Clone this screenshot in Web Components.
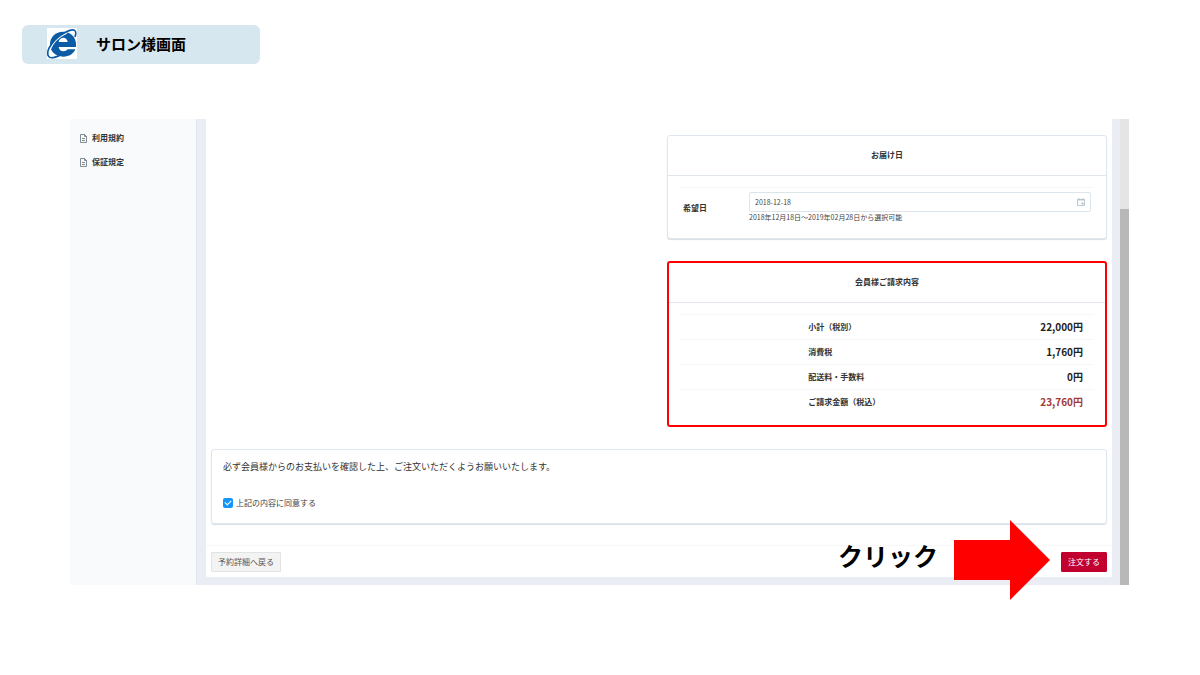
<!DOCTYPE html>
<html lang="ja">
<head>
<meta charset="utf-8">
<title>サロン様画面</title>
<style>
body { margin: 0; background: #fff; color: #333; font: 8px/12px "Noto Sans CJK JP", sans-serif; }
</style>
</head>
<body>
<order-page></order-page>
<script>
const define = (name, html) => {
  const template = document.createElement("template");
  template.innerHTML = html;
  customElements.define(name, class extends HTMLElement {
    constructor() {
      super();
      this.attachShadow({ mode: "open" }).append(template.content.cloneNode(true));
    }
  });
};

define("screen-badge", `
<style>
:host { display: flex; align-items: center; gap: 19px; box-sizing: border-box; width: 238px; max-width: 100%; height: 39px; padding: 0 0 2px 25px; border-radius: 6px; background: #d7e7ef; color: #000; font-size: 15px; font-weight: 700; line-height: 22px; }
svg { width: 30px; height: 31px; background: #fff; }
</style>
<svg viewBox="0 0 90 93" aria-hidden="true">
  <path fill="#0c5ba5" fill-rule="evenodd" d="M48 11C70 11 87 27 87 48V57H35C36 65 42 70 49 70C55 70 59 68 62 64H85C80 78 66 86 49 86C25 86 9 70 9 49C9 27 26 11 48 11ZM35 42H62C61 34 56 29 49 29C42 29 36 34 35 42Z"/>
  <path fill="none" stroke="#fff" stroke-width="4" d="M60 15C34 27 17 44 9 66"/>
  <path fill="none" stroke="#0c5ba5" stroke-width="5" d="M84 27C91 6 82 0 58 11C22 28 -5 66 4 84C9 94 27 88 42 80"/>
</svg>
<slot></slot>`);

define("side-link", `
<style>
:host { display: block; }
a { display: flex; align-items: center; gap: 4px; color: #333; text-decoration: none; font-weight: 700; }
svg { width: 9px; height: 9px; fill: none; stroke: #66717b; }
</style>
<a href="#"><svg viewBox="0 0 9 9" aria-hidden="true"><path d="M1.5.5h4l2 2v6h-6zM5.5.5v2h2M3 4.5h3M3 6.5h3" stroke-width=".8"/></svg><slot></slot></a>`);

define("info-card", `
<style>
:host { display: block; box-sizing: border-box; border: 1px solid #dfe6ed; border-radius: 3px; background: #fff; box-shadow: 0 1px 1px #d9dfe5; }
:host([highlight]) { border: 2px solid #f00; box-shadow: none; }
h2 { margin: 0; padding: 12px 13px 14px; border-bottom: 1px solid #e0e6eb; font-size: 8px; line-height: 13px; font-weight: 700; text-align: center; }
div { padding: 11px 12px; }
:host([highlight]) div { padding: 11px; }
</style>
<h2><slot name="title"></slot></h2><div><slot></slot></div>`);

define("date-field", `
<style>
:host { display: flex; align-items: center; padding: 4px 3px; border-top: 1px solid #f6f7f8; }
label { flex: 0 0 66px; font-weight: 700; }
.field { flex: 1; }
.box { display: flex; align-items: center; box-sizing: border-box; height: 20px; padding: 0 5px; border: 1px solid #dce5ec; border-radius: 2px; }
input { flex: 1; min-width: 0; padding: 0; border: 0; outline: 0; background: none; color: #444; font: inherit; font-size: 7px; }
svg { width: 8px; height: 8px; }
p { margin: 0; font-size: 7px; line-height: 11px; color: #444; }
</style>
<label for="day">希望日</label>
<div class="field">
  <div class="box"><input id="day" type="text" value="2018-12-18"><svg viewBox="0 0 8 8" aria-hidden="true"><path d="M.5 1.5h7v6h-7zM.5 2h7M2 0v2M6 0v2" fill="none" stroke="#a9bdcc" stroke-width=".8"/><path d="M4.5 4.5h2v2h-2z" fill="#a9bdcc"/></svg></div>
  <p>2018年12月18日～2019年02月28日から選択可能</p>
</div>`);

define("billing-table", `
<style>
:host { display: block; }
table { width: 100%; table-layout: fixed; border-collapse: separate; border-spacing: 0; }
th, td { box-sizing: border-box; height: 25px; padding: 0; border-top: 1px solid #f6f7f8; vertical-align: middle; }
th { padding-left: 31%; text-align: left; font-weight: 700; }
td { padding-right: 11px; text-align: right; font-size: 10px; font-weight: 700; color: #222; }
.total { color: #a13a35; }
</style>
<table>
<tr><th scope="row">小計（税別）</th><td>22,000円</td></tr>
<tr><th scope="row">消費税</th><td>1,760円</td></tr>
<tr><th scope="row">配送料・手数料</th><td>0円</td></tr>
<tr><th scope="row">ご請求金額（税込）</th><td class="total">23,760円</td></tr>
</table>`);

define("agree-box", `
<style>
:host { display: block; box-sizing: border-box; padding: 10px 11px 14px; border: 1px solid #dfe6ed; border-radius: 3px; box-shadow: 0 1px 1px #d9dfe5; }
p { margin: 0 0 24px; font-size: 9px; line-height: 13px; }
label { display: flex; align-items: center; gap: 3px; color: #444; }
input { appearance: none; width: 10px; height: 10px; margin: 0; border-radius: 2px; background: #1495fa; display: grid; place-items: center; }
input:checked::before { content: ""; box-sizing: border-box; width: 6px; height: 4px; border: solid #fff; border-width: 0 0 1px 1px; transform: rotate(-45deg); margin-bottom: 2px; }
</style>
<p>必ず会員様からのお支払いを確認した上、ご注文いただくようお願いいたします。</p>
<label><input type="checkbox" checked>上記の内容に同意する</label>`);

define("action-button", `
<style>
:host { display: block; }
button { display: block; box-sizing: border-box; height: 20px; padding: 0 6px; border: 1px solid #e3e3e3; border-radius: 1px; background: #f3f3f3; color: #555; font: inherit; }
:host([primary]) button { border-color: #c10030; background: #c10030; color: #fff; }
</style>
<button type="button"><slot></slot></button>`);

define("click-hint", `
<style>
:host { position: absolute; right: 62px; top: -26px; display: flex; align-items: center; gap: 16px; color: #000; font-size: 25px; line-height: 30px; font-weight: 700; }
svg { width: 96px; height: 80px; }
span { padding-bottom: 10px; }
</style>
<span><slot></slot></span>
<svg viewBox="0 0 96 80" aria-hidden="true"><path fill="#f00" d="M0 20H56V0L96 40L56 80V60H0Z"/></svg>`);

define("scroll-rail", `
<style>
:host { display: flex; flex-direction: column; width: 9px; background: #e5e5e5; }
i { flex: 0 1 90px; }
b { flex: 1; background: #b8b8b8; }
</style><i></i><b></b>`);

define("order-page", `
<style>
:host { display: block; padding: 25px 71px 24px 70px; }
screen-badge { margin: 0 0 55px -48px; }
.app { display: flex; }
nav { box-sizing: border-box; flex: 0 0 127px; padding: 13px 9px; display: flex; flex-direction: column; gap: 12px; background: #f8fafc; border-right: 1px solid #e0e5ee; }
.content { flex: 1; min-width: 0; padding: 0 8px 8px 9px; background: #eaeef4; }
main { padding: 16px 5px 5px; background: #fff; border-radius: 0 0 2px 2px; }
.columns { display: grid; grid-template-columns: 1fr 1fr; gap: 16px; }
.stack { grid-column: 2; display: grid; gap: 22px; }
agree-box { margin: 22px 0 21px; }
footer { position: relative; display: flex; justify-content: space-between; margin: 0 -5px; padding: 6px 5px 0; border-top: 1px solid #f6f7f8; }
</style>
<screen-badge>サロン様画面</screen-badge>
<div class="app">
  <nav><side-link>利用規約</side-link><side-link>保証規定</side-link></nav>
  <div class="content"><main>
    <div class="columns"><div class="stack">
      <info-card><span slot="title">お届け日</span><date-field></date-field></info-card>
      <info-card highlight><span slot="title">会員様ご請求内容</span><billing-table></billing-table></info-card>
    </div></div>
    <agree-box></agree-box>
    <footer><action-button>予約詳細へ戻る</action-button><action-button primary>注文する</action-button><click-hint>クリック</click-hint></footer>
  </main></div>
  <scroll-rail></scroll-rail>
</div>`);
</script>
</body>
</html>
